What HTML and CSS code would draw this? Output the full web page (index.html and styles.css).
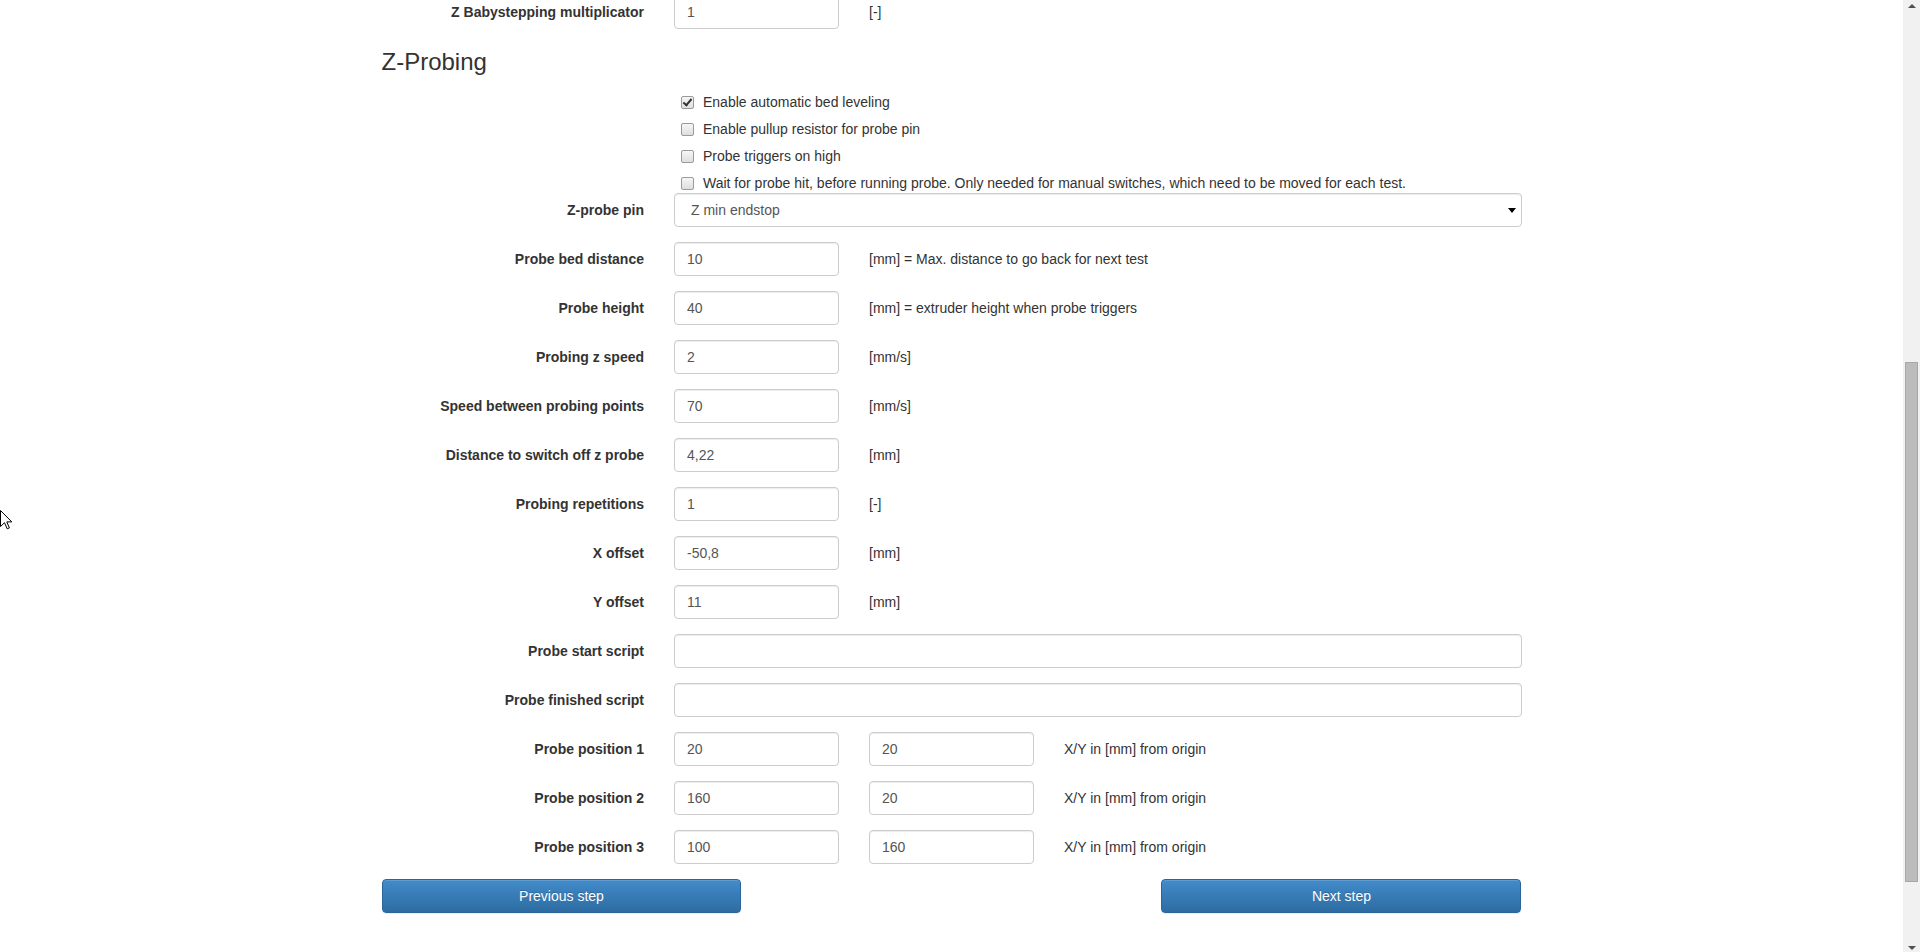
FILE: index.html
```html
<!DOCTYPE html>
<html lang="en">
<head>
<meta charset="utf-8">
<title>Z-Probing</title>
<link rel="stylesheet" href="styles.css">
</head>
<body>
<div class="screen">
  <div class="viewport">
    <div class="container">
      <form class="form">
        <div class="form-group">
          <label class="col-3 control-label">Z Babystepping multiplicator</label>
          <div class="col-2"><input class="form-control" type="text" value="1"></div>
          <div class="col-2 static">[-]</div>
        </div>

        <h3 class="section-title">Z-Probing</h3>

        <div class="form-group checks">
          <div class="col-9 offset-3">
            <div class="checkbox"><label><input type="checkbox" checked>Enable automatic bed leveling</label></div>
            <div class="checkbox"><label><input type="checkbox">Enable pullup resistor for probe pin</label></div>
            <div class="checkbox"><label><input type="checkbox">Probe triggers on high</label></div>
            <div class="checkbox"><label><input type="checkbox">Wait for probe hit, before running probe. Only needed for manual switches, which need to be moved for each test.</label></div>
          </div>
        </div>

        <div class="form-group">
          <label class="col-3 control-label">Z-probe pin</label>
          <div class="col-9">
            <div class="select-wrap">
              <select class="form-control select"><option>Z min endstop</option></select>
            </div>
          </div>
        </div>

        <div class="form-group">
          <label class="col-3 control-label">Probe bed distance</label>
          <div class="col-2"><input class="form-control" type="text" value="10"></div>
          <div class="col-7 static">[mm] = Max. distance to go back for next test</div>
        </div>
        <div class="form-group">
          <label class="col-3 control-label">Probe height</label>
          <div class="col-2"><input class="form-control" type="text" value="40"></div>
          <div class="col-7 static">[mm] = extruder height when probe triggers</div>
        </div>
        <div class="form-group">
          <label class="col-3 control-label">Probing z speed</label>
          <div class="col-2"><input class="form-control" type="text" value="2"></div>
          <div class="col-7 static">[mm/s]</div>
        </div>
        <div class="form-group">
          <label class="col-3 control-label">Speed between probing points</label>
          <div class="col-2"><input class="form-control" type="text" value="70"></div>
          <div class="col-7 static">[mm/s]</div>
        </div>
        <div class="form-group">
          <label class="col-3 control-label">Distance to switch off z probe</label>
          <div class="col-2"><input class="form-control" type="text" value="4,22"></div>
          <div class="col-7 static">[mm]</div>
        </div>
        <div class="form-group">
          <label class="col-3 control-label">Probing repetitions</label>
          <div class="col-2"><input class="form-control" type="text" value="1"></div>
          <div class="col-7 static">[-]</div>
        </div>
        <div class="form-group">
          <label class="col-3 control-label">X offset</label>
          <div class="col-2"><input class="form-control" type="text" value="-50,8"></div>
          <div class="col-7 static">[mm]</div>
        </div>
        <div class="form-group">
          <label class="col-3 control-label">Y offset</label>
          <div class="col-2"><input class="form-control" type="text" value="11"></div>
          <div class="col-7 static">[mm]</div>
        </div>
        <div class="form-group">
          <label class="col-3 control-label">Probe start script</label>
          <div class="col-9"><input class="form-control" type="text" value=""></div>
        </div>
        <div class="form-group">
          <label class="col-3 control-label">Probe finished script</label>
          <div class="col-9"><input class="form-control" type="text" value=""></div>
        </div>
        <div class="form-group">
          <label class="col-3 control-label">Probe position 1</label>
          <div class="col-2"><input class="form-control" type="text" value="20"></div>
          <div class="col-2"><input class="form-control" type="text" value="20"></div>
          <div class="col-5 static">X/Y in [mm] from origin</div>
        </div>
        <div class="form-group">
          <label class="col-3 control-label">Probe position 2</label>
          <div class="col-2"><input class="form-control" type="text" value="160"></div>
          <div class="col-2"><input class="form-control" type="text" value="20"></div>
          <div class="col-5 static">X/Y in [mm] from origin</div>
        </div>
        <div class="form-group">
          <label class="col-3 control-label">Probe position 3</label>
          <div class="col-2"><input class="form-control" type="text" value="100"></div>
          <div class="col-2"><input class="form-control" type="text" value="160"></div>
          <div class="col-5 static">X/Y in [mm] from origin</div>
        </div>

        <div class="form-group buttons">
          <div class="col-4"><button type="button" class="btn">Previous step</button></div>
          <div class="col-4 offset-4"><button type="button" class="btn">Next step</button></div>
        </div>
      </form>
    </div>
    <svg class="cursor" width="13" height="20" viewBox="0 0 13 20" aria-hidden="true">
      <path d="M0.5 0.5 L0.5 16.5 L4.5 12.7 L7.2 18.8 L9.4 17.9 L6.8 11.9 L11.8 11.9 Z" fill="#fff" stroke="#000" stroke-width="1" stroke-linejoin="miter"/>
    </svg>
  </div>
  <div class="scrollbar">
    <div class="sb-btn"><span class="arrow-up"></span></div>
    <div class="sb-track"><div class="sb-thumb"></div></div>
    <div class="sb-btn"><span class="arrow-down"></span></div>
  </div>
</div>
</body>
</html>
```

FILE: styles.css
```css
* { box-sizing: border-box; }

html, body {
  margin: 0;
  padding: 0;
  height: 100%;
  overflow: hidden;
  background: #fff;
}

body {
  font-family: "Liberation Sans", Arial, sans-serif;
  font-size: 14px;
  line-height: 20px;
  color: #333;
}

.screen {
  display: flex;
  height: 952px;
}

.viewport {
  flex: 1;
  position: relative;
  overflow: hidden;
}

.container {
  width: 1170px;
  margin: 0 auto;
  padding: 0 15px;
}

.form {
  margin-top: -5px;
}

.form-group {
  display: flex;
  margin: 0 -15px 15px;
}

.col-2, .col-3, .col-4, .col-5, .col-7, .col-9 {
  padding: 0 15px;
  flex: none;
}
.col-2 { width: 16.66667%; }
.col-3 { width: 25%; }
.col-4 { width: 33.33333%; }
.col-5 { width: 41.66667%; }
.col-7 { width: 58.33333%; }
.col-9 { width: 75%; }
.offset-3 { margin-left: 25%; }
.offset-4 { margin-left: 33.33333%; }

.control-label {
  text-align: right;
  font-weight: bold;
  padding-top: 7px;
  line-height: 20px;
}

.static {
  padding-top: 7px;
  line-height: 20px;
  color: #333;
}

.form-control {
  display: block;
  width: 100%;
  height: 34px;
  padding: 6px 12px;
  font-family: "Liberation Sans", Arial, sans-serif;
  font-size: 14px;
  line-height: 20px;
  color: #555;
  background: #fff;
  border: 1px solid #ccc;
  border-radius: 4px;
  box-shadow: inset 0 1px 1px rgba(0, 0, 0, 0.075);
  outline: none;
  margin: 0;
}

.section-title {
  font-size: 24px;
  font-weight: 500;
  line-height: 26px;
  margin: 20px 0 10px;
  color: #333;
}

.checks {
  margin-bottom: 0;
}

.checkbox {
  padding-top: 7px;
  min-height: 27px;
}

.checkbox label {
  display: flex;
  align-items: flex-start;
  line-height: 20px;
  font-weight: normal;
  color: #333;
}

.checkbox input {
  appearance: none;
  -webkit-appearance: none;
  flex: none;
  width: 13px;
  height: 13px;
  margin: 4px 9px 0 7px;
  border: 1px solid #9a9a9a;
  border-radius: 2px;
  background: linear-gradient(#f6f6f6, #dedede);
  position: relative;
}

.checkbox input:checked::after {
  content: "";
  position: absolute;
  left: 3px;
  top: 0px;
  width: 3px;
  height: 7px;
  border: solid #333;
  border-width: 0 2px 2px 0;
  transform: rotate(40deg);
}

.select-wrap {
  position: relative;
}

.select {
  appearance: none;
  -webkit-appearance: none;
  padding-left: 16px;
  background: #fff;
}

.select-wrap::after {
  content: "";
  position: absolute;
  right: 6px;
  top: 15px;
  border-left: 4px solid transparent;
  border-right: 4px solid transparent;
  border-top: 5px solid #000;
  pointer-events: none;
}

.buttons {
  margin-bottom: 0;
}

.btn {
  display: block;
  width: 100%;
  height: 34px;
  padding: 6px 12px;
  font-family: "Liberation Sans", Arial, sans-serif;
  font-size: 14px;
  line-height: 20px;
  color: #fff;
  text-align: center;
  text-shadow: 0 -1px 0 rgba(0, 0, 0, 0.2);
  background: linear-gradient(#428bca, #2d6ca2);
  border: 1px solid #2b669a;
  border-radius: 4px;
  box-shadow: inset 0 1px 0 rgba(255, 255, 255, 0.15), 0 1px 1px rgba(0, 0, 0, 0.075);
  cursor: pointer;
}

.cursor {
  position: absolute;
  left: 0;
  top: 510px;
}

/* fake browser scrollbar */
.scrollbar {
  width: 17px;
  flex: none;
  display: flex;
  flex-direction: column;
  background: #f1f1f1;
}

.sb-btn {
  height: 17px;
  flex: none;
  display: flex;
  align-items: center;
  justify-content: center;
}

.arrow-up {
  width: 0;
  height: 0;
  border-left: 4px solid transparent;
  border-right: 4px solid transparent;
  border-bottom: 4px solid #505050;
  margin-top: -6px;
}

.arrow-down {
  width: 0;
  height: 0;
  border-left: 4px solid transparent;
  border-right: 4px solid transparent;
  border-top: 4px solid #505050;
  margin-top: 8px;
}

.sb-track {
  flex: 1;
  padding: 0 2px;
}

.sb-thumb {
  margin-top: 345px;
  height: 520px;
  background: #bcbcbc;
  border: 1px solid #a8a8a8;
}
```
